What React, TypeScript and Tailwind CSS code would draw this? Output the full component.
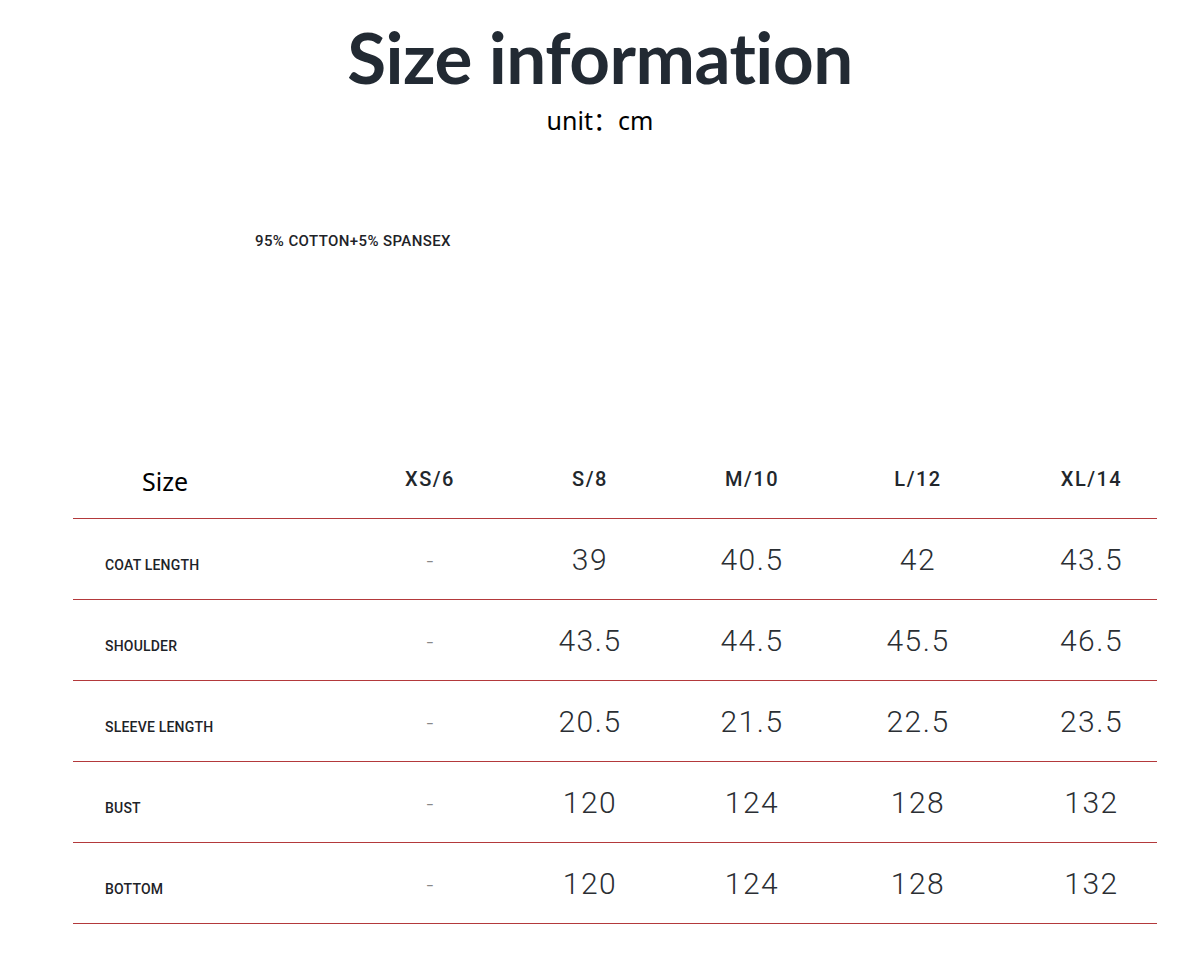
const COLS = ['XS/6', 'S/8', 'M/10', 'L/12', 'XL/14'];

const ROWS = [
  { label: 'COAT LENGTH', values: ['-', '39', '40.5', '42', '43.5'] },
  { label: 'SHOULDER', values: ['-', '43.5', '44.5', '45.5', '46.5'] },
  { label: 'SLEEVE LENGTH', values: ['-', '20.5', '21.5', '22.5', '23.5'] },
  { label: 'BUST', values: ['-', '120', '124', '128', '132'] },
  { label: 'BOTTOM', values: ['-', '120', '124', '128', '132'] },
];

// column widths chosen so each cell centre lines up with the reference
const CELL = ['w-[160px]', 'w-[160px]', 'w-[164px]', 'w-[168px]', 'w-[155px] pl-[24px]'];

export default function App() {
  return (
    <div className="w-[1200px] h-[961px] bg-white overflow-hidden">
      <h1 className="pt-[21px] text-center text-[71px] leading-none font-bold tracking-[-0.5px] text-[#222a33] font-['Lato',sans-serif]">
        Size information
      </h1>
      <p className="mt-[16px] text-center text-[25px] leading-none text-black font-['Noto_Sans','Noto_Sans_CJK_SC',sans-serif]">
        unit：cm
      </p>

      <p className="mt-[101px] pl-[255px] text-[15px] leading-none font-medium tracking-[0.4px] text-[#1e2328] font-['Roboto',sans-serif]">
        95% COTTON+5% SPANSEX
      </p>

      <div className="mt-[190px] ml-[73px] w-[1084px]">
        <div className="flex h-[80px] items-center border-b border-[#b3393b]">
          <div className="w-[277px] pl-[69px] pt-[6px] text-[25px] text-black font-['Noto_Sans',sans-serif]">Size</div>
          {COLS.map((c, i) => (
            <div key={c} className={`${CELL[i]} text-center text-[20px] font-medium tracking-[1.5px] text-[#22272c] font-['Roboto',sans-serif]`}>
              {c}
            </div>
          ))}
        </div>

        {ROWS.map(row => (
          <div key={row.label} className="flex h-[81px] items-center border-b border-[#b3393b]">
            <div className="w-[277px] pl-[32px] pt-[12px] text-[14px] font-medium tracking-[0.2px] text-[#1e2328] font-['Roboto',sans-serif]">
              {row.label}
            </div>
            {row.values.map((v, i) => (
              <div
                key={i}
                className={`${CELL[i]} text-center font-['Roboto',sans-serif] font-light ${v === '-' ? 'pt-[4px] text-[24px] text-[#888]' : 'text-[30px] tracking-[1.5px] text-[#2a2e33]'}`}
              >
                {v}
              </div>
            ))}
          </div>
        ))}
      </div>
    </div>
  );
}
